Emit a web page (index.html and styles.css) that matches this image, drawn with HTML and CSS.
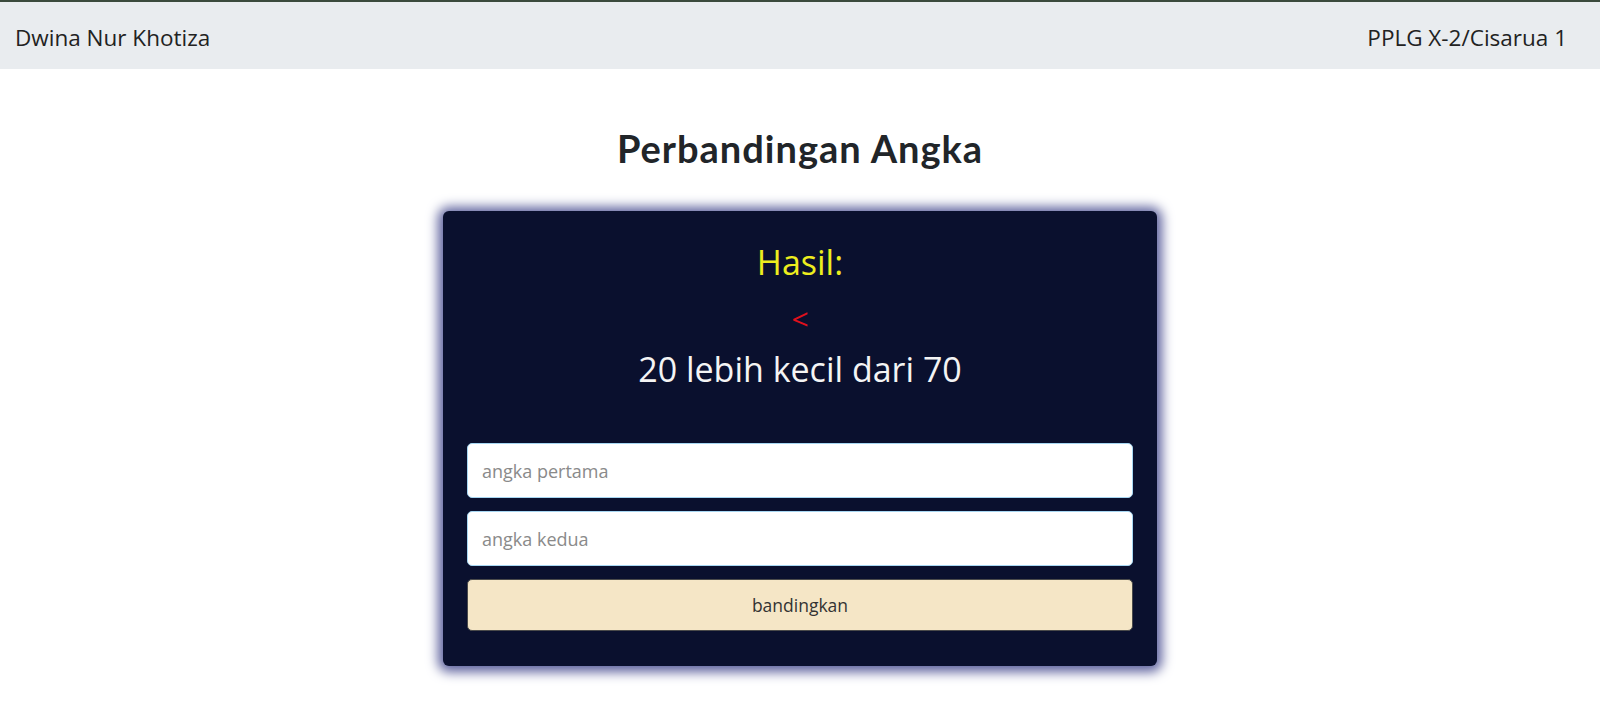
FILE: index.html
```html
<!DOCTYPE html>
<html lang="id">
<head>
<meta charset="utf-8">
<title>Perbandingan Angka</title>
<link rel="stylesheet" href="styles.css">
</head>
<body>
<nav class="navbar">
  <span class="brand">Dwina Nur Khotiza</span>
  <span class="school">PPLG X-2/Cisarua 1</span>
</nav>
<main class="page">
  <h1 class="title">Perbandingan Angka</h1>
  <section class="card">
    <div class="result">
      <h3 class="result-label">Hasil:</h3>
      <p class="result-sign">&lt;</p>
      <p class="result-text">20 lebih kecil dari 70</p>
    </div>
    <form class="form">
      <input class="field" type="text" placeholder="angka pertama">
      <input class="field" type="text" placeholder="angka kedua">
      <button class="btn" type="button">bandingkan</button>
    </form>
  </section>
</main>
</body>
</html>
```

FILE: styles.css
```css
* { box-sizing: border-box; }
html, body { margin: 0; padding: 0; }
body {
  font-family: "Open Sans", "Noto Sans", sans-serif;
  background: #ffffff;
  color: #212529;
  border-top: 2px solid #3b4a3d;
}
.navbar {
  height: 67px;
  background: #e9ecef;
  display: flex;
  align-items: center;
  justify-content: space-between;
  padding: 4px 33px 0 15px;
  font-size: 22.5px;
  color: #222;
}
.page {
  display: flex;
  flex-direction: column;
  align-items: center;
  padding-bottom: 40px;
}
.title {
  font-family: "Lato", sans-serif;
  font-weight: 700;
  font-size: 38px;
  letter-spacing: 1px;
  color: #212529;
  margin: 57px 0 39px;
  line-height: 1.2;
}
.card {
  width: 714px;
  background: #0a102e;
  border-radius: 6px;
  padding: 24px 24px 35px;
  box-shadow: 0 1px 12px 5px #5d619d;
}
.result {
  text-align: center;
  padding-top: 7px;
  margin-bottom: 53px;
}
.result-label {
  margin: 0;
  font-weight: 400;
  font-size: 34px;
  line-height: 1.2;
  color: #eded1e;
}
.result-sign {
  margin: 19px 0 0;
  font-size: 30px;
  line-height: 1.2;
  color: #e0101c;
}
.result-text {
  margin: 12px 0 0;
  font-size: 34px;
  line-height: 1.2;
  color: #f4f4f4;
}
.form {
  display: flex;
  flex-direction: column;
  gap: 13px;
}
.field {
  height: 55px;
  border: 1px solid #a6d6f2;
  border-radius: 5px;
  background: #fff;
  padding: 0 14px;
  font-family: inherit;
  font-size: 18px;
  color: #333;
}
.field::placeholder { color: #8a8a8a; }
.btn {
  height: 52px;
  border: 1px solid #4a4a4a;
  border-radius: 5px;
  background: #f5e6c6;
  font-family: inherit;
  font-size: 17.5px;
  color: #333;
}
```
